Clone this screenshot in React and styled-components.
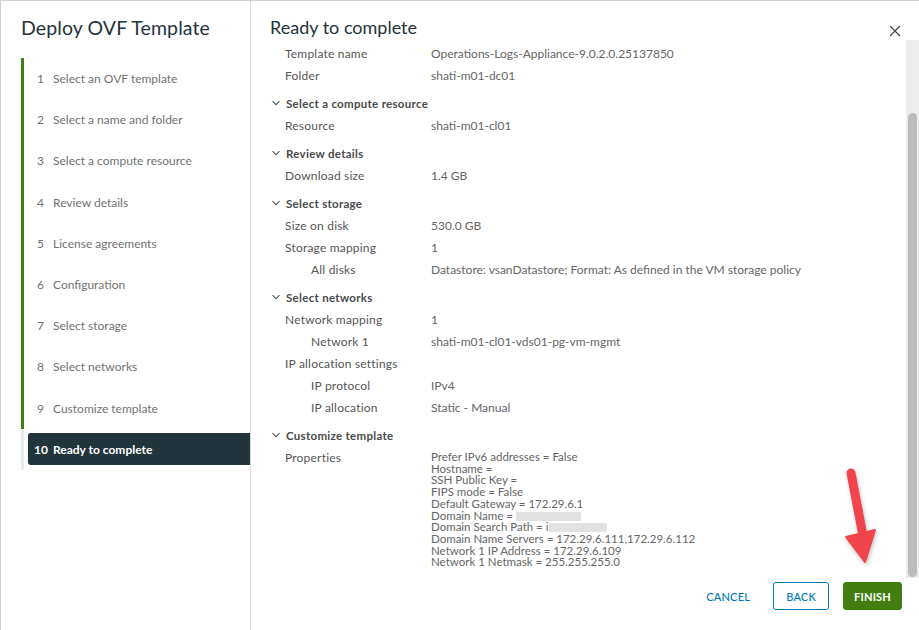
import styled, { createGlobalStyle } from "styled-components"

const Global = createGlobalStyle`
  html, body { margin: 0; padding: 0; background: #fff; }
  body { font-family: Lato, "Open Sans", sans-serif; color: #565656; }
`

const Frame = styled.div`
  position: relative;
  width: 919px;
  height: 630px;
  box-sizing: border-box;
  border-top: 1px solid #c9d3d8;
  border-left: 1px solid #c9d3d8;
  display: flex;
  background: #fff;
  overflow: hidden;
`

const Side = styled.aside`
  width: 250px;
  flex-shrink: 0;
  border-right: 1px solid #d7dde0;
  box-sizing: border-box;
  padding: 15px 0 0 20px;
`

const SideTitle = styled.h1`
  margin: 0 0 19px;
  font-size: 19.5px;
  font-weight: 400;
  color: #25333a;
  letter-spacing: 0.1px;
`

const Steps = styled.ol`
  list-style: none;
  margin: 0;
  padding: 0;
`

const Step = styled.li`
  display: flex;
  align-items: center;
  height: 41.2px;
  border-left: 3px solid ${p => (p.done ? "#3f7f0f" : "#e6ecef")};
  box-sizing: border-box;
  padding-left: ${p => (p.active ? "4px" : "0")};
`

const StepInner = styled.div`
  display: flex;
  align-items: center;
  flex: 1;
  height: ${p => (p.active ? "32px" : "auto")};
  padding-left: ${p => (p.active ? "6px" : "13px")};
  background: ${p => (p.active ? "#22343c" : "transparent")};
  border-radius: ${p => (p.active ? "3px 0 0 3px" : "0")};
  color: ${p => (p.active ? "#fff" : "#727272")};
  font-weight: ${p => (p.active ? 700 : 400)};
  font-size: 12px;
`

const StepNum = styled.span`
  width: 16px;
  margin-right: ${p => (p.active ? "3px" : "0")};
`

const Main = styled.section`
  flex: 1;
  display: flex;
  flex-direction: column;
  min-width: 0;
`

const Header = styled.div`
  display: flex;
  align-items: center;
  justify-content: space-between;
  padding: 13px 18px 0 19px;
  height: 26px;
`

const Title = styled.h2`
  margin: 0;
  font-size: 18px;
  font-weight: 400;
  color: #25333a;
`

const Close = styled.button`
  border: 0;
  background: none;
  padding: 0;
  margin-top: 8px;
  display: flex;
  cursor: pointer;
`

const Body = styled.div`
  flex: 1;
  display: flex;
  min-height: 0;
`

const Content = styled.div`
  flex: 1;
  padding: 3px 0 0 20px;
`

const Track = styled.div`
  width: 13px;
  background: #ececec;
  display: flex;
  flex-direction: column;
  justify-content: flex-end;
  padding: 0 2px 1px;
  box-sizing: border-box;
`

const Thumb = styled.div`
  height: 464px;
  background: #bcbcbc;
  border-radius: 5px;
`

const Row = styled.div`
  display: flex;
  align-items: flex-start;
  min-height: 22px;
  font-size: 12px;
  line-height: 13px;
  padding-top: 4px;
  box-sizing: border-box;
`

const Label = styled.div`
  width: ${p => (p.indent ? "120px" : "146px")};
  padding-left: ${p => (p.indent ? "40px" : "14px")};
  flex-shrink: 0;
  color: #565656;
  letter-spacing: 0.2px;
`

const Value = styled.div`
  color: #666;
  white-space: pre-line;
  font-size: ${p => (p.dense ? "11.5px" : "12px")};
  line-height: ${p => (p.dense ? "11.7px" : "13px")};
`

const Section = styled.div`
  display: flex;
  align-items: center;
  gap: 5px;
  margin-top: 4px;
  height: 24px;
  font-size: 11.5px;
  font-weight: 700;
  color: #4a4a4a;
  letter-spacing: 0.3px;
`

const Footer = styled.div`
  display: flex;
  justify-content: flex-end;
  align-items: flex-start;
  gap: 14px;
  padding: 4px 17px 0 0;
  height: 52px;
  box-sizing: border-box;
`

const Btn = styled.button`
  height: 28px;
  padding: 0 ${p => (p.kind === "link" ? "8px" : "10px")};
  border-radius: 3px;
  font-family: Lato, sans-serif;
  font-size: 11px;
  font-weight: ${p => (p.kind === "primary" ? 700 : 500)};
  letter-spacing: 0.2px;
  cursor: pointer;
  border: 1px solid ${p => (p.kind === "outline" ? "#0079b8" : p.kind === "primary" ? "#417d10" : "transparent")};
  background: ${p => (p.kind === "primary" ? "#417d10" : "#fff")};
  color: ${p => (p.kind === "primary" ? "#fff" : "#0079b8")};
  min-width: ${p => (p.kind === "outline" ? "56px" : p.kind === "primary" ? "58px" : "0")};
`

const Arrow = styled.svg`
  position: absolute;
  left: 836px;
  top: 462px;
  filter: drop-shadow(1px 2px 2px rgba(0,0,0,0.25));
`

const Chevron = () => (
  <svg width="10" height="10" viewBox="0 0 10 10">
    <path d="M1.5 3.2 L5 6.7 L8.5 3.2" fill="none" stroke="#555" strokeWidth="1.1" />
  </svg>
)

const steps = [
  "Select an OVF template",
  "Select a name and folder",
  "Select a compute resource",
  "Review details",
  "License agreements",
  "Configuration",
  "Select storage",
  "Select networks",
  "Customize template",
  "Ready to complete",
]

const props = `Prefer IPv6 addresses = False
Hostname =
SSH Public Key =
FIPS mode = False
Default Gateway = 172.29.6.1
Domain Name = `

const Redact = styled.span`
  display: inline-block;
  width: ${p => p.w}px;
  height: 9px;
  background: #e2e2e2;
  vertical-align: -1px;
`

export default function App() {
  return (
    <>
      <Global />
      <Frame>
        <Side>
          <SideTitle>Deploy OVF Template</SideTitle>
          <Steps>
            {steps.map((s, i) => {
              const active = i === steps.length - 1
              return (
                <Step key={s} done={!active} active={active}>
                  <StepInner active={active}>
                    <StepNum active={active}>{i + 1}</StepNum>
                    {s}
                  </StepInner>
                </Step>
              )
            })}
          </Steps>
        </Side>
        <Main>
          <Header>
            <Title>Ready to complete</Title>
            <Close aria-label="close">
              <svg width="12" height="12" viewBox="0 0 12 12">
                <path d="M1 1 L11 11 M11 1 L1 11" stroke="#444" strokeWidth="1.2" />
              </svg>
            </Close>
          </Header>
          <Body>
            <Content>
              <Row><Label>Template name</Label><Value>Operations-Logs-Appliance-9.0.2.0.25137850</Value></Row>
              <Row><Label>Folder</Label><Value>shati-m01-dc01</Value></Row>
              <Section><Chevron />Select a compute resource</Section>
              <Row><Label>Resource</Label><Value>shati-m01-cl01</Value></Row>
              <Section><Chevron />Review details</Section>
              <Row><Label>Download size</Label><Value>1.4 GB</Value></Row>
              <Section><Chevron />Select storage</Section>
              <Row><Label>Size on disk</Label><Value>530.0 GB</Value></Row>
              <Row><Label>Storage mapping</Label><Value>1</Value></Row>
              <Row><Label indent>All disks</Label><Value>Datastore: vsanDatastore; Format: As defined in the VM storage policy</Value></Row>
              <Section><Chevron />Select networks</Section>
              <Row><Label>Network mapping</Label><Value>1</Value></Row>
              <Row><Label indent>Network 1</Label><Value>shati-m01-cl01-vds01-pg-vm-mgmt</Value></Row>
              <Row><Label>IP allocation settings</Label><Value></Value></Row>
              <Row><Label indent>IP protocol</Label><Value>IPv4</Value></Row>
              <Row><Label indent>IP allocation</Label><Value>Static - Manual</Value></Row>
              <Section><Chevron />Customize template</Section>
              <Row>
                <Label>Properties</Label>
                <Value dense>
                  {props}<Redact w={65} />{"\n"}
                  Domain Search Path = i<Redact w={58} />{"\n"}
                  {`Domain Name Servers = 172.29.6.111,172.29.6.112
Network 1 IP Address = 172.29.6.109
Network 1 Netmask = 255.255.255.0`}
                </Value>
              </Row>
            </Content>
            <Track><Thumb /></Track>
          </Body>
          <Footer>
            <Btn kind="link">CANCEL</Btn>
            <Btn kind="outline">BACK</Btn>
            <Btn kind="primary">FINISH</Btn>
          </Footer>
        </Main>
        <Arrow width="50" height="110" viewBox="0 0 50 110">
          <path d="M14 10 L27 78" stroke="#f2444b" strokeWidth="9" strokeLinecap="round" />
          <path d="M9 74 L38 67 L28 99 Z" fill="#f2444b" stroke="#f2444b" strokeWidth="2" strokeLinejoin="round" />
        </Arrow>
      </Frame>
    </>
  )
}
